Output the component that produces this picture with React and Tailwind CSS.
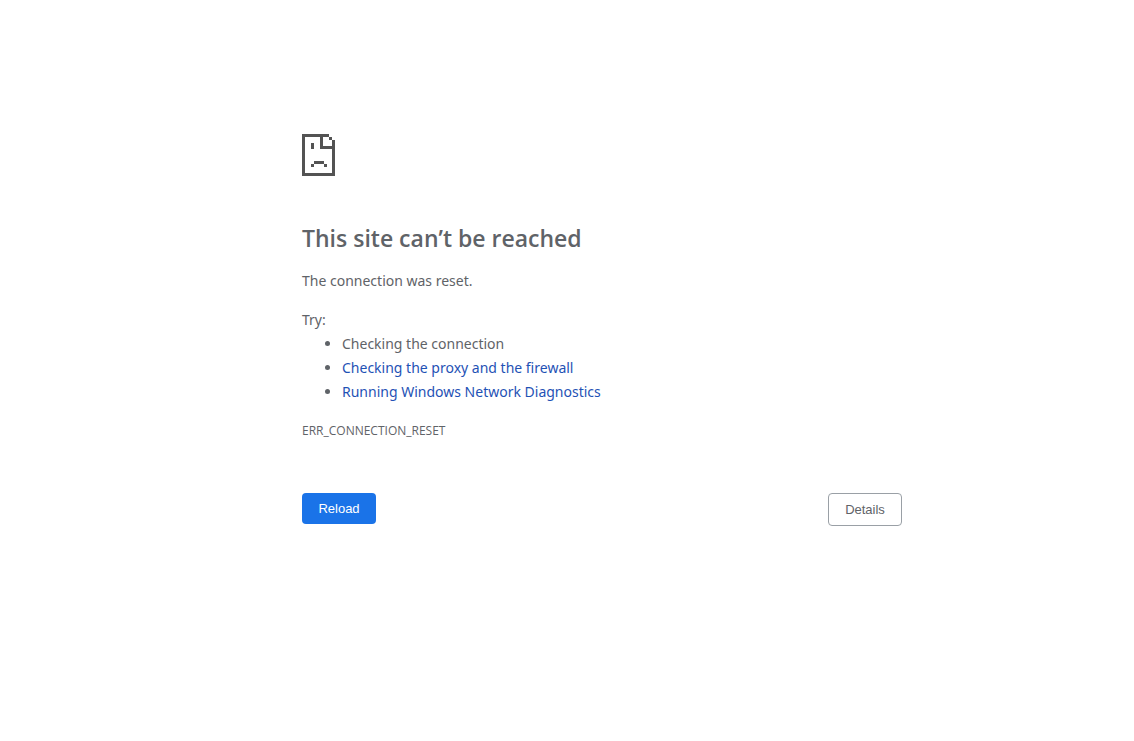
import { useState } from 'react';

const suggestions = [
  { text: 'Checking the connection' },
  { text: 'Checking the proxy and the firewall', href: '#proxy' },
  { text: 'Running Windows Network Diagnostics', href: '#diagnostics' },
];

function SadPageIcon() {
  return (
    <svg
      className="w-[33px] h-[42px] text-[#535353]"
      viewBox="0 0 33 42"
      fill="currentColor"
      shapeRendering="crispEdges"
      aria-hidden="true"
    >
      {/* Sheet outline and folded corner */}
      <path d="M0 0h27v3h-6v9h9V6h3v36H0zM3 3v36h27V15H18V3z" fillRule="evenodd" />
      <path d="M27 3h3v3h-3z" />
      {/* Face */}
      <path d="M9 9h3v6H9zM12 27h10v3H12zM9 30h3v3H9zM22 30h3v3h-3z" />
    </svg>
  );
}

export default function App() {
  const [reloads, setReloads] = useState(0);

  return (
    <div className="min-h-screen bg-white pl-[70px] text-[#5f6368] font-['Noto_Sans','Open_Sans',sans-serif]">
      <main key={reloads} className="max-w-[600px] mx-auto pt-[134px] text-[14px] leading-6">
        <SadPageIcon />

        <h1 className="mt-12 text-[23px] leading-7 font-semibold font-['Open_Sans','Noto_Sans',sans-serif]">
          This site can’t be reached
        </h1>
        <p className="mt-[17px]">The connection was reset.</p>

        <div className="mt-[15px]">
          <p>Try:</p>
          <ul className="list-disc pl-10">
            {suggestions.map((item) => (
              <li key={item.text}>
                {item.href ? (
                  <a href={item.href} className="text-[#1f52b5]">
                    {item.text}
                  </a>
                ) : (
                  item.text
                )}
              </li>
            ))}
          </ul>
        </div>

        <p className="mt-[15px] text-[12px] font-['Open_Sans','Noto_Sans',sans-serif]">ERR_CONNECTION_RESET</p>

        {/* Actions */}
        <div className="mt-[50px] flex items-start justify-between font-['Liberation_Sans',Arial,sans-serif] text-[13px] leading-[15px]">
          <button
            type="button"
            onClick={() => setReloads(reloads + 1)}
            className="min-w-[74px] rounded-[4px] bg-[#1a73e8] px-4 py-2 text-white"
          >
            Reload
          </button>
          <button type="button" className="min-w-[74px] rounded-[4px] border border-[#9aa0a6] px-4 py-2">
            Details
          </button>
        </div>
      </main>
    </div>
  );
}
